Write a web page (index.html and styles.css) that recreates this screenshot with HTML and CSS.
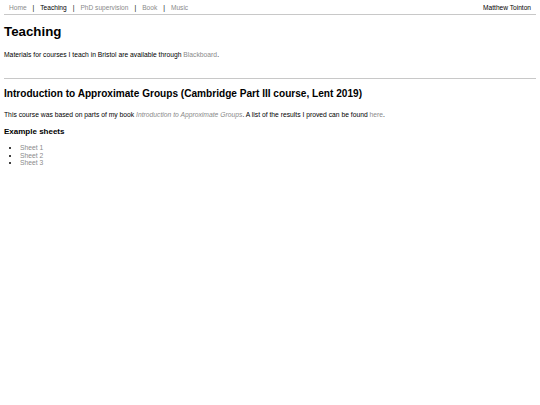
FILE: index.html
```html
<!DOCTYPE html>
<html>
<head>
<meta charset="utf-8">
<title>Teaching</title>
<link rel="stylesheet" href="styles.css">
</head>
<body>
<nav class="topnav">
  <div class="nav-links">
    <a href="#" class="link">Home</a><span class="sep">|</span><a href="#" class="current">Teaching</a><span class="sep">|</span><a href="#" class="link">PhD supervision</a><span class="sep">|</span><a href="#" class="link">Book</a><span class="sep">|</span><a href="#" class="link">Music</a>
  </div>
  <div class="nav-name">Matthew Tointon</div>
</nav>
<main class="content">
  <h1 class="title">Teaching</h1>
  <p class="text">Materials for courses I teach in Bristol are available through <a href="#" class="link">Blackboard</a>.</p>
  <hr class="rule">
  <h2 class="course">Introduction to Approximate Groups (Cambridge Part III course, Lent 2019)</h2>
  <p class="text">This course was based on parts of my book <a href="#" class="link book">Introduction to Approximate Groups</a>. A list of the results I proved can be found <a href="#" class="link">here</a>.</p>
  <h3 class="sub">Example sheets</h3>
  <ul class="sheets">
    <li><a href="#" class="link">Sheet 1</a></li>
    <li><a href="#" class="link">Sheet 2</a></li>
    <li><a href="#" class="link">Sheet 3</a></li>
  </ul>
</main>
</body>
</html>
```
FILE: styles.css
```css
html, body {
  margin: 0;
  padding: 0;
  background: #ffffff;
}
body {
  font-family: "Liberation Sans", Arial, sans-serif;
  font-size: 6.75px;
  color: #000;
  padding: 0 4px;
}
a {
  text-decoration: none;
}
.link {
  color: #8a8a8a;
}
.book {
  font-style: italic;
}
.topnav {
  display: flex;
  justify-content: space-between;
  align-items: center;
  height: 14px;
  border-bottom: 1px solid #c8c8c8;
  font-size: 6.6px;
}
.nav-links {
  padding-left: 5px;
}
.current {
  color: #000;
}
.sep {
  margin: 0 6px;
  color: #000;
}
.nav-name {
  padding-right: 5px;
}
.title {
  font-size: 13.3px;
  margin: 9px 0 0;
  line-height: 16px;
}
.text {
  margin: 11px 0 0;
  line-height: 8px;
}
.rule {
  margin: 19px 0 0;
  border: 0;
  border-top: 1px solid #c8c8c8;
  height: 0;
}
.course {
  font-size: 10.1px;
  margin: 9px 0 0;
  line-height: 12px;
}
.sub {
  font-size: 8px;
  margin: 8px 0 0;
  line-height: 10px;
}
.sheets {
  margin: 7px 0 0;
  padding-left: 16px;
  line-height: 7.5px;
}
```
